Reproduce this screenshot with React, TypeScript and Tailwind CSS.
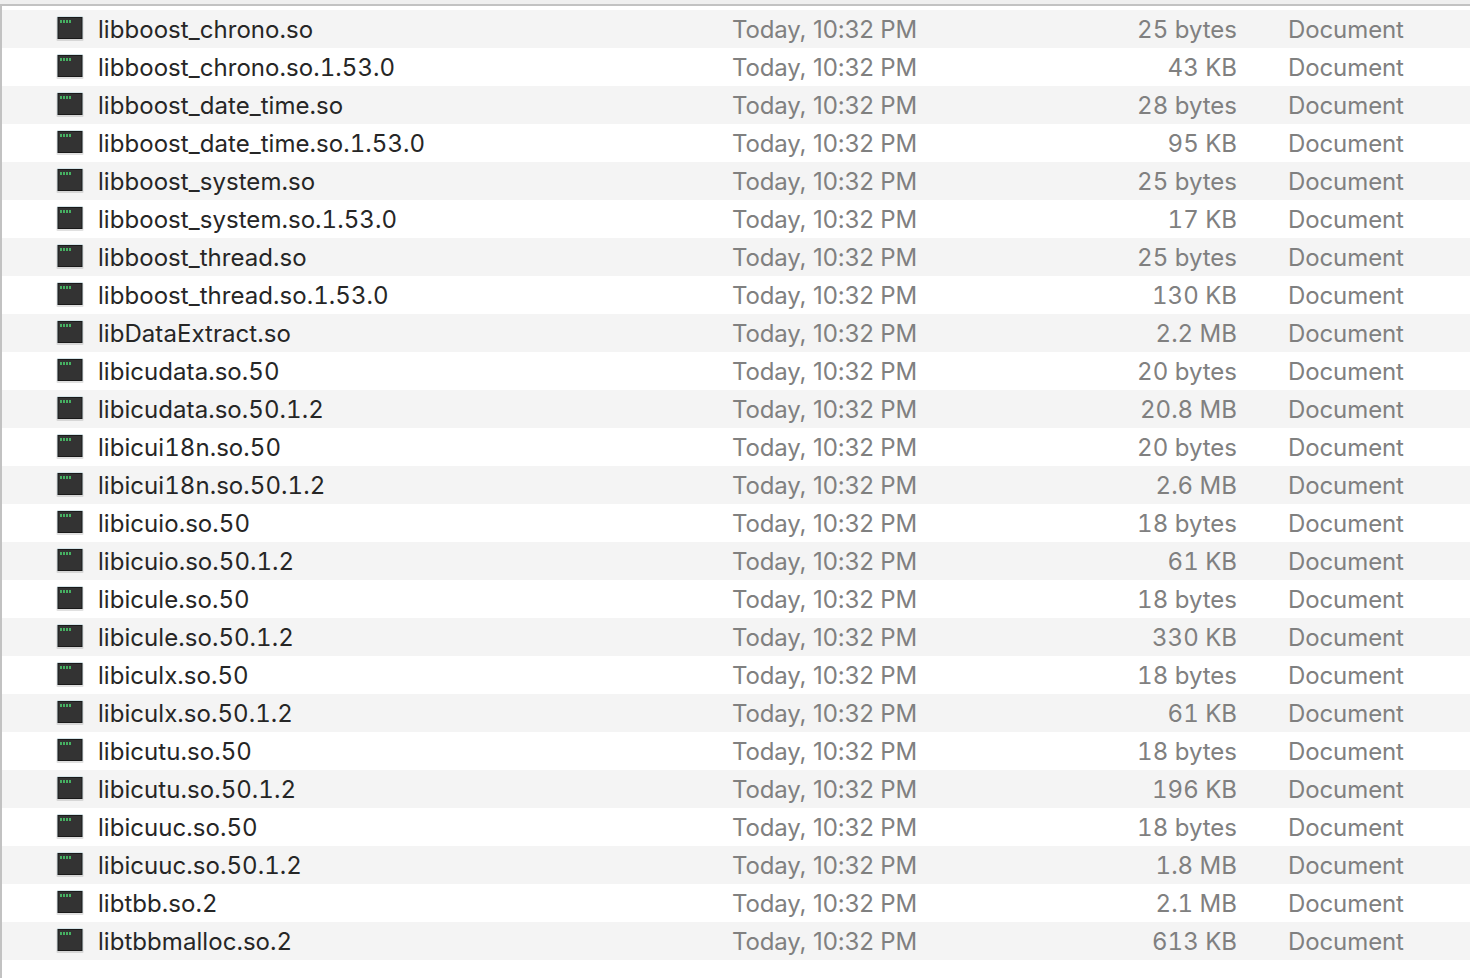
const files: [string, string][] = [
  ['libboost_chrono.so', '25 bytes'],
  ['libboost_chrono.so.1.53.0', '43 KB'],
  ['libboost_date_time.so', '28 bytes'],
  ['libboost_date_time.so.1.53.0', '95 KB'],
  ['libboost_system.so', '25 bytes'],
  ['libboost_system.so.1.53.0', '17 KB'],
  ['libboost_thread.so', '25 bytes'],
  ['libboost_thread.so.1.53.0', '130 KB'],
  ['libDataExtract.so', '2.2 MB'],
  ['libicudata.so.50', '20 bytes'],
  ['libicudata.so.50.1.2', '20.8 MB'],
  ['libicui18n.so.50', '20 bytes'],
  ['libicui18n.so.50.1.2', '2.6 MB'],
  ['libicuio.so.50', '18 bytes'],
  ['libicuio.so.50.1.2', '61 KB'],
  ['libicule.so.50', '18 bytes'],
  ['libicule.so.50.1.2', '330 KB'],
  ['libiculx.so.50', '18 bytes'],
  ['libiculx.so.50.1.2', '61 KB'],
  ['libicutu.so.50', '18 bytes'],
  ['libicutu.so.50.1.2', '196 KB'],
  ['libicuuc.so.50', '18 bytes'],
  ['libicuuc.so.50.1.2', '1.8 MB'],
  ['libtbb.so.2', '2.1 MB'],
  ['libtbbmalloc.so.2', '613 KB'],
];

const ExecIcon = () => (
  <svg width="28" height="25" viewBox="0 0 28 25" className="block shrink-0">
    <rect x="0.5" y="1" width="27" height="24" rx="1" fill="#000" opacity="0.12" />
    <rect x="1" y="0" width="26" height="23" rx="1" fill="#d5e4e8" />
    <rect x="1.5" y="1" width="25" height="22" fill="#1a1a1a" />
    <rect x="2.5" y="2" width="23" height="20" fill="#333333" />
    <path d="M4 5.5h2m1 0h2m1 0h2m1 0h2" stroke="#46b062" strokeWidth="3" />
  </svg>
);

const App = () => {
  return (
    <div className="h-[978px] w-[1470px] overflow-hidden bg-white font-['Inter',sans-serif] text-[24px] tabular-nums">
      <div className="h-[4px] bg-[#efefef]" />
      <div className="h-[2px] bg-[#c2c2c2]" />
      <div className="h-[972px] border-l-2 border-[#c2c2c2] pt-[4px]">
        {files.map(([name, size], i) => (
          <div
            key={name}
            className={`flex h-[38px] items-center ${i % 2 === 0 ? 'bg-[#f4f4f4]' : 'bg-white'}`}
          >
            <div className="ml-[54px] mr-[14px] pb-[1px]">
              <ExecIcon />
            </div>
            <span className="w-[634px] shrink-0 pt-[2px] tracking-[0.05px] text-[#262626]">{name}</span>
            <span className="w-[231px] shrink-0 pt-[2px] tracking-[-0.13px] text-[#808080] [font-variant-numeric:normal]">Today, 10:32 PM</span>
            <span className="w-[274px] shrink-0 pt-[2px] text-right text-[#808080]">{size}</span>
            <span className="ml-[51px] pt-[2px] tracking-[-0.1px] text-[#808080]">Document</span>
          </div>
        ))}
      </div>
    </div>
  );
};

export default App;
